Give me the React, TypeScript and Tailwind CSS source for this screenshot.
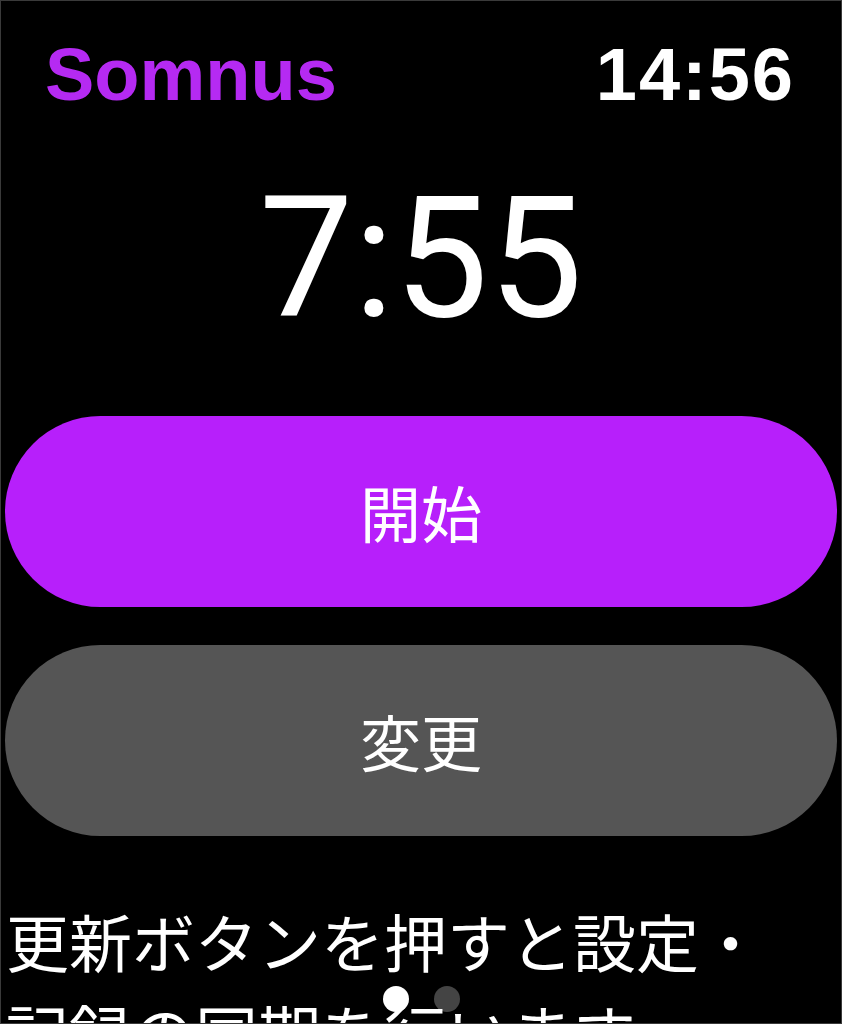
export default function App() {
  return (
    <div className="relative h-[1024px] w-[842px] overflow-hidden border border-[#3a3a3a] bg-black text-white">
      {/* header */}
      <div
        className="flex items-start justify-between pl-[44px] pr-[46px] pt-[37px] text-[74px] font-bold leading-none"
        style={{ fontFamily: '"Liberation Sans", Arial, sans-serif' }}
      >
        <span className="text-[#b52af2]">Somnus</span>
        <span className="tracking-[2px]">14:56</span>
      </div>

      {/* alarm time */}
      <div
        className="mt-[63px] text-center text-[168px] font-normal leading-none"
        style={{ fontFamily: 'Roboto, "Liberation Sans", sans-serif' }}
      >
        7:55
      </div>

      {/* buttons */}
      <div
        className="mx-[4px] mt-[73px] flex flex-col gap-[38px]"
        style={{ fontFamily: '"Noto Sans CJK JP", sans-serif' }}
      >
        <button
          type="button"
          className="flex h-[191px] w-full items-center justify-center rounded-full bg-[#b71ffb] text-[61px] text-white"
        >
          開始
        </button>
        <button
          type="button"
          className="flex h-[191px] w-full items-center justify-center rounded-full bg-[#555555] text-[61px] text-white"
        >
          変更
        </button>
      </div>

      {/* page dots */}
      <div className="absolute left-0 right-0 top-[985px] flex justify-center gap-[25px]">
        <div className="size-[26px] rounded-full bg-white" />
        <div className="size-[26px] rounded-full bg-[#444444]" />
      </div>

      {/* description */}
      <p
        className="relative mt-[58px] pl-[5px] text-[63px] leading-[91px]"
        style={{ fontFamily: '"Noto Sans CJK JP", sans-serif' }}
      >
        更新ボタンを押すと設定・
        <br />
        記録の同期を行います
      </p>
    </div>
  );
}
